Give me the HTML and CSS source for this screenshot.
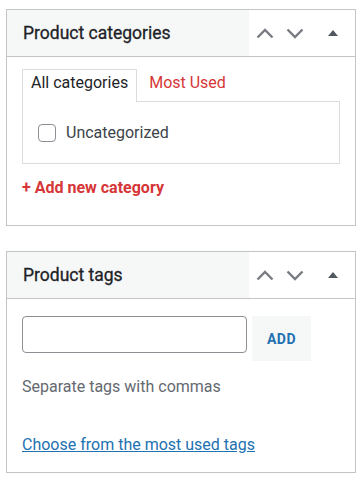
FILE: index.html
```html
<!DOCTYPE html>
<html lang="en">
<head>
    <meta charset="UTF-8">
    <meta name="viewport" content="width=device-width, initial-scale=1.0">
    <title>Product categories and tags</title>
    <link rel="stylesheet" href="styles.css">
</head>
<body>
    <div class="postbox">
        <div class="postbox-header">
            <h2 class="hndle">Product categories</h2>
            <div class="handle-actions">
                <button class="handle-btn" aria-label="Move up">
                    <svg width="18" height="11" viewBox="0 0 18 11"><path d="M1.5 9.5 L9 2 L16.5 9.5" fill="none" stroke="#787c82" stroke-width="2.4"/></svg>
                </button>
                <button class="handle-btn" aria-label="Move down">
                    <svg width="18" height="11" viewBox="0 0 18 11"><path d="M1.5 1.5 L9 9 L16.5 1.5" fill="none" stroke="#787c82" stroke-width="2.4"/></svg>
                </button>
                <button class="handle-btn" aria-label="Toggle panel">
                    <svg width="10" height="6" viewBox="0 0 10 6"><path d="M0 6 L5 0 L10 6 Z" fill="#50575e"/></svg>
                </button>
            </div>
        </div>
        <div class="inside">
            <ul class="category-tabs">
                <li class="tab active">All categories</li>
                <li class="tab"><a href="#">Most Used</a></li>
            </ul>
            <div class="tabs-panel">
                <label class="check-row"><span class="checkbox"></span>Uncategorized</label>
            </div>
            <a href="#" class="add-new">+ Add new category</a>
        </div>
    </div>

    <div class="postbox">
        <div class="postbox-header">
            <h2 class="hndle">Product tags</h2>
            <div class="handle-actions">
                <button class="handle-btn" aria-label="Move up">
                    <svg width="18" height="11" viewBox="0 0 18 11"><path d="M1.5 9.5 L9 2 L16.5 9.5" fill="none" stroke="#787c82" stroke-width="2.4"/></svg>
                </button>
                <button class="handle-btn" aria-label="Move down">
                    <svg width="18" height="11" viewBox="0 0 18 11"><path d="M1.5 1.5 L9 9 L16.5 1.5" fill="none" stroke="#787c82" stroke-width="2.4"/></svg>
                </button>
                <button class="handle-btn" aria-label="Toggle panel">
                    <svg width="10" height="6" viewBox="0 0 10 6"><path d="M0 6 L5 0 L10 6 Z" fill="#50575e"/></svg>
                </button>
            </div>
        </div>
        <div class="inside tags-inside">
            <div class="tag-add">
                <input type="text" class="tag-input">
                <button class="tag-btn">Add</button>
            </div>
            <p class="howto">Separate tags with commas</p>
            <a href="#" class="tag-cloud-link">Choose from the most used tags</a>
        </div>
    </div>
</body>
</html>
```

FILE: styles.css
```css
body {
    margin: 0;
    padding: 9px 6px 0;
    background: #fff;
    font-family: Roboto, "Liberation Sans", sans-serif;
    color: #1d2327;
}

.postbox {
    border: 1px solid #c3c4c7;
    background: #fff;
    margin-bottom: 25px;
}

.postbox-header {
    display: flex;
    align-items: stretch;
    height: 46px;
    border-bottom: 1px solid #c3c4c7;
}

.hndle {
    flex: 1;
    margin: 0;
    padding: 0 16px;
    background: #f6f7f7;
    display: flex;
    align-items: center;
    font-size: 17.5px;
    font-weight: 400;
    color: #1d2327;
    -webkit-text-stroke: 0.3px #1d2327;
}

.handle-actions {
    display: flex;
    width: 106px;
}

.handle-btn {
    width: 30px;
    height: 46px;
    padding: 0;
    border: none;
    background: none;
    display: flex;
    align-items: center;
    justify-content: center;
}

.handle-btn:first-child {
    width: 31px;
}

.handle-btn:last-child {
    width: 45px;
}

.inside {
    padding: 12px 15px 0;
}

.category-tabs {
    list-style: none;
    margin: 0;
    padding: 0;
    display: flex;
}

.tab {
    height: 32px;
    box-sizing: border-box;
    padding: 3px 8px 0;
    font-size: 16px;
    line-height: 20px;
    border: 1px solid transparent;
    border-bottom: none;
}

.tab.active {
    border-color: #dcdcde;
    background: #fff;
    margin-bottom: -1px;
    position: relative;
    height: 33px;
}

.tab a {
    color: #d63638;
    text-decoration: none;
    padding-left: 3px;
}

.tabs-panel {
    width: 318px;
    box-sizing: border-box;
    height: 63px;
    border: 1px solid #dcdcde;
    padding: 21px 15px 0;
}

.check-row {
    display: flex;
    align-items: center;
    font-size: 16px;
    color: #3c434a;
}

.checkbox {
    width: 16px;
    height: 16px;
    border: 1px solid #8c8f94;
    border-radius: 4px;
    margin-right: 10px;
}

.add-new {
    display: block;
    margin: 14px 0 28px;
    font-size: 16px;
    font-weight: 700;
    color: #d63638;
    text-decoration: none;
}

.tags-inside {
    padding-top: 17px;
    padding-bottom: 18px;
}

.tag-add {
    display: flex;
    align-items: flex-start;
    gap: 5px;
}

.tag-input {
    width: 225px;
    height: 37px;
    box-sizing: border-box;
    border: 1px solid #8c8f94;
    border-radius: 4px;
    margin: 0;
}

.tag-btn {
    width: 59px;
    height: 45px;
    border: none;
    background: #f6f7f7;
    color: #2271b1;
    font-family: Roboto, "Liberation Sans", sans-serif;
    font-size: 14px;
    font-weight: 700;
    text-transform: uppercase;
    letter-spacing: 0.5px;
    padding: 0;
}

.howto {
    margin: 16px 0 0;
    font-size: 16px;
    color: #646970;
}

.tag-cloud-link {
    display: inline-block;
    margin-top: 39px;
    font-size: 16px;
    color: #2271b1;
}
```
